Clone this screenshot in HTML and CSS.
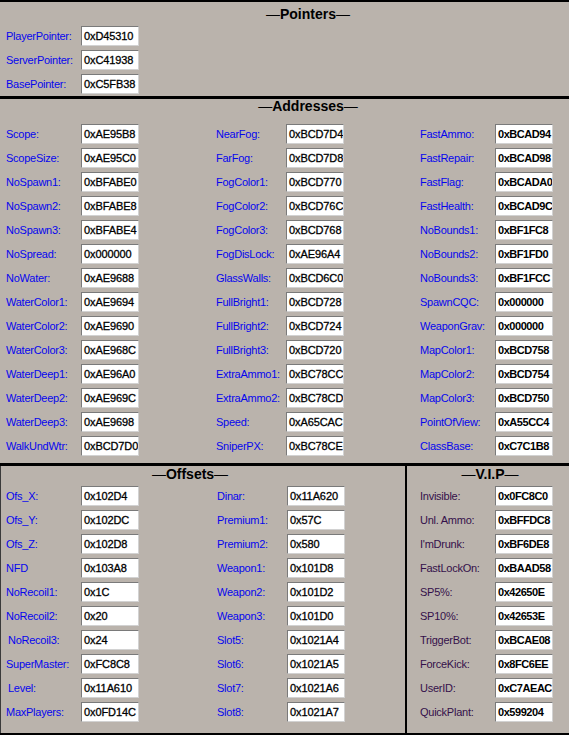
FILE: index.html
```html
<!DOCTYPE html>
<html>
<head>
<meta charset="utf-8">
<title>Offsets</title>
<link rel="stylesheet" href="styles.css">
</head>
<body>
<div class="form">

  <section class="group pointers">
    <h2 class="title"><span class="dash">—</span>Pointers<span class="dash">—</span></h2>
    <div class="cols">
      <div class="col c1">
        <div class="field"><span class="label">PlayerPointer:</span><span class="box">0xD45310</span></div>
        <div class="field"><span class="label">ServerPointer:</span><span class="box">0xC41938</span></div>
        <div class="field"><span class="label">BasePointer:</span><span class="box">0xC5FB38</span></div>
      </div>
    </div>
  </section>

  <section class="group addresses">
    <h2 class="title"><span class="dash">—</span>Addresses<span class="dash">—</span></h2>
    <div class="cols">
      <div class="col c1">
        <div class="field"><span class="label">Scope:</span><span class="box">0xAE95B8</span></div>
        <div class="field"><span class="label">ScopeSize:</span><span class="box">0xAE95C0</span></div>
        <div class="field"><span class="label">NoSpawn1:</span><span class="box">0xBFABE0</span></div>
        <div class="field"><span class="label">NoSpawn2:</span><span class="box">0xBFABE8</span></div>
        <div class="field"><span class="label">NoSpawn3:</span><span class="box">0xBFABE4</span></div>
        <div class="field"><span class="label">NoSpread:</span><span class="box">0x000000</span></div>
        <div class="field"><span class="label">NoWater:</span><span class="box">0xAE9688</span></div>
        <div class="field"><span class="label">WaterColor1:</span><span class="box">0xAE9694</span></div>
        <div class="field"><span class="label">WaterColor2:</span><span class="box">0xAE9690</span></div>
        <div class="field"><span class="label">WaterColor3:</span><span class="box">0xAE968C</span></div>
        <div class="field"><span class="label">WaterDeep1:</span><span class="box">0xAE96A0</span></div>
        <div class="field"><span class="label">WaterDeep2:</span><span class="box">0xAE969C</span></div>
        <div class="field"><span class="label">WaterDeep3:</span><span class="box">0xAE9698</span></div>
        <div class="field"><span class="label">WalkUndWtr:</span><span class="box">0xBCD7D0</span></div>
      </div>
      <div class="col c2">
        <div class="field"><span class="label">NearFog:</span><span class="box">0xBCD7D4</span></div>
        <div class="field"><span class="label">FarFog:</span><span class="box">0xBCD7D8</span></div>
        <div class="field"><span class="label">FogColor1:</span><span class="box">0xBCD770</span></div>
        <div class="field"><span class="label">FogColor2:</span><span class="box">0xBCD76C</span></div>
        <div class="field"><span class="label">FogColor3:</span><span class="box">0xBCD768</span></div>
        <div class="field"><span class="label">FogDisLock:</span><span class="box">0xAE96A4</span></div>
        <div class="field"><span class="label">GlassWalls:</span><span class="box">0xBCD6C0</span></div>
        <div class="field"><span class="label">FullBright1:</span><span class="box">0xBCD728</span></div>
        <div class="field"><span class="label">FullBright2:</span><span class="box">0xBCD724</span></div>
        <div class="field"><span class="label">FullBright3:</span><span class="box">0xBCD720</span></div>
        <div class="field"><span class="label">ExtraAmmo1:</span><span class="box">0xBC78CC</span></div>
        <div class="field"><span class="label">ExtraAmmo2:</span><span class="box">0xBC78CD</span></div>
        <div class="field"><span class="label">Speed:</span><span class="box">0xA65CAC</span></div>
        <div class="field"><span class="label">SniperPX:</span><span class="box">0xBC78CE</span></div>
      </div>
      <div class="col c3">
        <div class="field"><span class="label">FastAmmo:</span><span class="box">0xBCAD94</span></div>
        <div class="field"><span class="label">FastRepair:</span><span class="box">0xBCAD98</span></div>
        <div class="field"><span class="label">FastFlag:</span><span class="box">0xBCADA0</span></div>
        <div class="field"><span class="label">FastHealth:</span><span class="box">0xBCAD9C</span></div>
        <div class="field"><span class="label">NoBounds1:</span><span class="box">0xBF1FC8</span></div>
        <div class="field"><span class="label">NoBounds2:</span><span class="box">0xBF1FD0</span></div>
        <div class="field"><span class="label">NoBounds3:</span><span class="box">0xBF1FCC</span></div>
        <div class="field"><span class="label">SpawnCQC:</span><span class="box">0x000000</span></div>
        <div class="field"><span class="label">WeaponGrav:</span><span class="box">0x000000</span></div>
        <div class="field"><span class="label">MapColor1:</span><span class="box">0xBCD758</span></div>
        <div class="field"><span class="label">MapColor2:</span><span class="box">0xBCD754</span></div>
        <div class="field"><span class="label">MapColor3:</span><span class="box">0xBCD750</span></div>
        <div class="field"><span class="label">PointOfView:</span><span class="box">0xA55CC4</span></div>
        <div class="field"><span class="label">ClassBase:</span><span class="box">0xC7C1B8</span></div>
      </div>
    </div>
  </section>

  <div class="lower">
    <section class="group offsets">
      <h2 class="title"><span class="dash">—</span>Offsets<span class="dash">—</span></h2>
      <div class="cols">
        <div class="col c1">
          <div class="field"><span class="label">Ofs_X:</span><span class="box">0x102D4</span></div>
          <div class="field"><span class="label">Ofs_Y:</span><span class="box">0x102DC</span></div>
          <div class="field"><span class="label">Ofs_Z:</span><span class="box">0x102D8</span></div>
          <div class="field"><span class="label">NFD</span><span class="box">0x103A8</span></div>
          <div class="field"><span class="label">NoRecoil1:</span><span class="box">0x1C</span></div>
          <div class="field"><span class="label">NoRecoil2:</span><span class="box">0x20</span></div>
          <div class="field"><span class="label indent">NoRecoil3:</span><span class="box">0x24</span></div>
          <div class="field"><span class="label">SuperMaster:</span><span class="box">0xFC8C8</span></div>
          <div class="field"><span class="label indent">Level:</span><span class="box">0x11A610</span></div>
          <div class="field"><span class="label">MaxPlayers:</span><span class="box">0x0FD14C</span></div>
        </div>
        <div class="col c2">
          <div class="field"><span class="label">Dinar:</span><span class="box">0x11A620</span></div>
          <div class="field"><span class="label">Premium1:</span><span class="box">0x57C</span></div>
          <div class="field"><span class="label">Premium2:</span><span class="box">0x580</span></div>
          <div class="field"><span class="label">Weapon1:</span><span class="box">0x101D8</span></div>
          <div class="field"><span class="label">Weapon2:</span><span class="box">0x101D2</span></div>
          <div class="field"><span class="label">Weapon3:</span><span class="box">0x101D0</span></div>
          <div class="field"><span class="label">Slot5:</span><span class="box">0x1021A4</span></div>
          <div class="field"><span class="label">Slot6:</span><span class="box">0x1021A5</span></div>
          <div class="field"><span class="label">Slot7:</span><span class="box">0x1021A6</span></div>
          <div class="field"><span class="label">Slot8:</span><span class="box">0x1021A7</span></div>
        </div>
      </div>
    </section>

    <section class="group vip">
      <h2 class="title"><span class="dash">—</span>V.I.P<span class="dash">—</span></h2>
      <div class="cols">
        <div class="col c1">
          <div class="field"><span class="label">Invisible:</span><span class="box">0x0FC8C0</span></div>
          <div class="field"><span class="label">Unl. Ammo:</span><span class="box">0xBFFDC8</span></div>
          <div class="field"><span class="label">I'mDrunk:</span><span class="box">0xBF6DE8</span></div>
          <div class="field"><span class="label">FastLockOn:</span><span class="box">0xBAAD58</span></div>
          <div class="field"><span class="label">SP5%:</span><span class="box">0x42650E</span></div>
          <div class="field"><span class="label">SP10%:</span><span class="box">0x42653E</span></div>
          <div class="field"><span class="label">TriggerBot:</span><span class="box">0xBCAE08</span></div>
          <div class="field"><span class="label">ForceKick:</span><span class="box">0x8FC6EE</span></div>
          <div class="field"><span class="label">UserID:</span><span class="box">0xC7AEAC</span></div>
          <div class="field"><span class="label">QuickPlant:</span><span class="box">0x599204</span></div>
        </div>
      </div>
    </section>
  </div>

</div>
</body>
</html>
```

FILE: styles.css
```css
* {
  box-sizing: border-box;
  margin: 0;
  padding: 0;
}

body {
  margin: 0;
  background: #bab3ac;
  font-family: "Liberation Sans", Arial, sans-serif;
}

.form {
  width: 569px;
  height: 735px;
  display: flex;
  flex-direction: column;
  border-top: 2px solid #000;
}

/* group headings: bold caption flanked by thin dashes */
.title {
  font-size: 14px;
  font-weight: bold;
  color: #000;
  text-align: center;
  white-space: nowrap;
}

.dash {
  font-weight: normal;
}

.cols {
  display: flex;
}

.col {
  display: flex;
  flex-direction: column;
  gap: 4px;
  flex: none;
}

.field {
  display: flex;
  align-items: center;
  height: 20px;
}

.label {
  width: 75px;
  flex: none;
  font-size: 11px;
  letter-spacing: -0.25px;
  color: #0606ee;
  white-space: nowrap;
}

.label.indent {
  padding-left: 2px;
}

/* sunken white text box holding a hex value */
.box {
  width: 58px;
  height: 20px;
  flex: none;
  background: #fff;
  border: 1px solid;
  border-color: #7a7a7a #d2d2d2 #d2d2d2 #7a7a7a;
  padding-left: 2px;
  font-size: 11px;
  letter-spacing: -0.1px;
  -webkit-text-stroke: 0.3px #000;
  line-height: 18px;
  color: #000;
  white-space: nowrap;
  overflow: hidden;
}

/* the right-hand address column and the V.I.P boxes use a bold face */
.addresses .c3 .box,
.vip .box {
  font-weight: bold;
  letter-spacing: -0.45px;
  -webkit-text-stroke: 0;
}

/* Pointers */
.pointers {
  height: 94px;
}

.pointers .title {
  height: 24px;
  line-height: 24px;
  padding-left: 47px;
}

.pointers .cols {
  padding-left: 6px;
}

/* Addresses */
.addresses {
  height: 367px;
  border-top: 3px solid #000;
}

.addresses .title {
  height: 14px;
  line-height: 14px;
  margin-bottom: 11px;
  padding-left: 47px;
}

.addresses .cols {
  padding-left: 6px;
}

.addresses .c1 {
  width: 210px;
}

.addresses .c2 {
  width: 204px;
}

.addresses .c2 .label {
  width: 70px;
}

/* Offsets and V.I.P */
.lower {
  height: 272px;
  display: flex;
  border-top: 3px solid #000;
  border-bottom: 2px solid #000;
}

.lower .title {
  height: 16px;
  line-height: 16px;
  margin-bottom: 4px;
}

.offsets {
  width: 407px;
  flex: none;
  border-left: 1px solid #3a3a3a;
  border-right: 2px solid #000;
}

.offsets .title {
  padding-right: 26px;
}

.offsets .cols {
  padding-left: 5px;
}

.offsets .c1 {
  width: 211px;
}

.offsets .c2 .label {
  width: 70px;
}

.vip {
  flex: 1;
}

.vip .title {
  padding-left: 4px;
}

.vip .cols {
  padding-left: 13px;
}

.vip .label {
  color: #34104a;
}
```
